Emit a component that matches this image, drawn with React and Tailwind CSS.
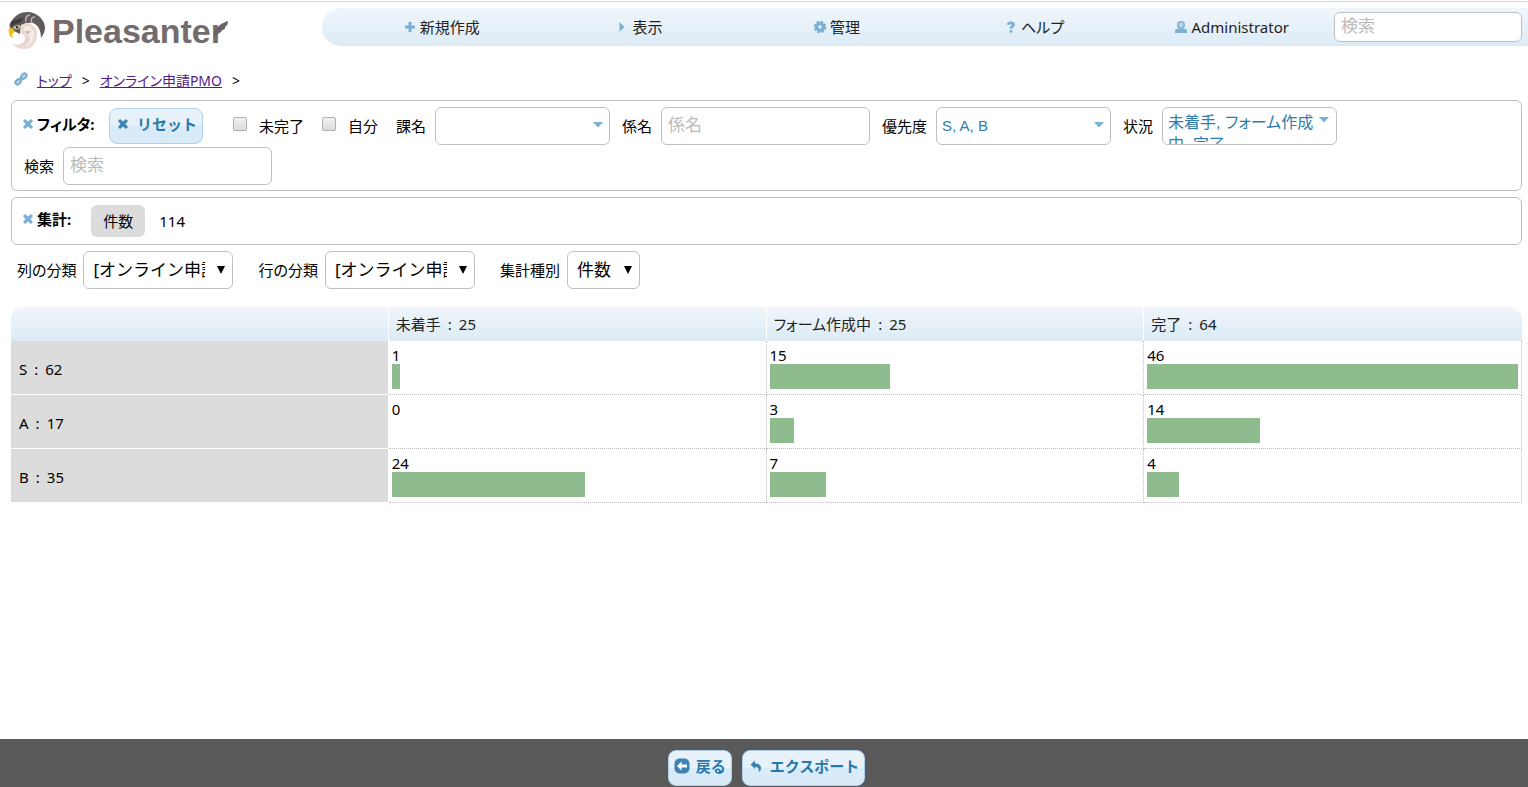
import React, { useState } from "react";

const icons = {
  plus: <path d="M6.5 3h3v3.5H13v3H9.500V13h-3V9.500H3v-3h3.500z" />,
  right: <path d="M5.500 3 10.500 8 5.500 13z" />,
  down: <path d="M3 5h10L8 10.500z" />,
  close: (
    <path d="M3 5 5 3l3 2.500L11 3l2 2-2.500 3L13 11l-2 2-3-2.500L5 13l-2-2 2.500-3z" />
  ),
  gear: (
    <>
      <circle cx="8" cy="8" r="3.400" fill="none" stroke="currentColor" strokeWidth="3.400" />
      <circle
        cx="8"
        cy="8"
        r="5.300"
        fill="none"
        stroke="currentColor"
        strokeWidth="2"
        strokeDasharray="2.400 1.763"
      />
    </>
  ),
  help: (
    <>
      <path
        d="M5.300 5.800C5.300 3.300 10.500 3.300 10.500 5.800 10.500 7.600 8 7.200 8 9.700"
        fill="none"
        stroke="currentColor"
        strokeWidth="2.800"
      />
      <path d="M6.600 11h2.800v2.600H6.600z" />
    </>
  ),
  person: (
    <>
      <circle cx="8" cy="6" r="3.200" fillOpacity="0.4" stroke="currentColor" strokeWidth="1.500" />
      <path d="M2 14v-2c0-1.500 1.500-2.200 3-2.200h6c1.500 0 3 .7 3 2.200v2z" />
    </>
  ),
  link: (
    <g
      fill="currentColor"
      fillOpacity="0.4"
      stroke="currentColor"
      strokeWidth="2.200"
      transform="rotate(-45 8 8)"
    >
      <rect x="1" y="6" width="6" height="4" rx="2" />
      <rect x="9" y="6" width="6" height="4" rx="2" />
      <path d="M6 8h4" />
    </g>
  ),
  back: (
    <>
      <rect x="0.500" y="0.500" width="15" height="15" rx="5" />
      <path d="M3 8l4.500-4.500v3H13v3H7.500v3z" fill="#fff" />
    </>
  ),
  undo: (
    <path d="M2.500 6.500 7 2.500v3c4 0 6 2 6 4.500 0 2-1 3.500-2.500 4 1-2.500 0-5-3.500-5v2z" />
  ),
};

const Icon = ({ name, className = "w-4 h-4 text-[#7bafd4]" }) => (
  <svg viewBox="0 0 16 16" fill="currentColor" className={`shrink-0 ${className}`} aria-hidden="true">
    {icons[name]}
  </svg>
);

const menus = [
  { icon: "plus", label: "新規作成" },
  { icon: "right", label: "表示" },
  { icon: "gear", label: "管理" },
  { icon: "help", label: "ヘルプ" },
  { icon: "person", label: "Administrator" },
];

const columns = [
  { label: "未着手", total: 25 },
  { label: "フォーム作成中", total: 25 },
  { label: "完了", total: 64 },
];

const rows = [
  { label: "S", total: 62, values: [1, 15, 46] },
  { label: "A", total: 17, values: [0, 3, 14] },
  { label: "B", total: 35, values: [24, 7, 4] },
];

const maxValue = Math.max(...rows.flatMap((row) => row.values));

const Logo = () => (
  <a href="#top" className="flex items-center w-[322px] h-[42px] pt-1 pl-2 shrink-0" aria-label="Pleasanter">
    <svg viewBox="0 0 38 38" className="w-[38px] h-[38px]" aria-hidden="true">
      <path
        d="M3 10C7 3 13 0 19 0c10 0 17 7 18 15 0 5-2 8-4 11 0-8-3-13-8-15-5-1-9 0-12 3l-1 8-8-4C1 15 1 12 3 10z"
        fill="#615a5d"
      />
      <path
        d="M13 13c7-4 14-1 16 7 1 10-5 17-13 17-5 0-9-2-11-5 7 2 12-2 12-6 0-3-3-3-5-6z"
        fill="#ead9d2"
      />
      <path d="M16 15c6-2 10 2 10 8 0 6-4 11-9 12 5-4 6-9 4-12-2-2-5-3-5-8z" fill="#f6ece7" />
      <path d="M3 10c4-3 9-2 13-5-2 5-5 6-7 7-3 0-5 1-7 4z" fill="#3f3b3e" />
      <path d="M5 15c3-2 6-2 8-1-1 3-4 4-7 3z" fill="#c9c3a4" />
      <circle cx="9" cy="15.200" r="1.200" fill="#2b2829" />
      <path d="M1 16c2-1 5 1 6 4-3 1-3 4-2 6-4-1-5-6-4-10z" fill="#f2c41a" />
      <path
        d="M18 10c-1-4 1-7 4-7M24 11c-2-4 0-6 3-6M18 19l2 2 2-2"
        fill="none"
        stroke="#b9b2b4"
        strokeWidth="1.500"
      />
    </svg>
    <span className="pl-1.5 font-['Liberation_Sans'] text-[34px] leading-[38px] font-bold text-[#746b6d]">
      Pleasanter
    </span>
    <svg viewBox="0 0 14 16" className="w-3.5 h-4 -ml-2.5 mb-1" aria-hidden="true">
      <path d="M0 11C3 5 8 2 14 0c0 3-1 5-3 6 1 1-1 3-3 3 0 2-3 3-8 7z" fill="#6b6265" />
    </svg>
  </a>
);

const fieldClass = "h-[38px] rounded-md border border-[#c0c0c0] bg-white";

const TextField = ({ id, label }) => (
  <div className="flex items-center gap-[9px]">
    <label htmlFor={id}>{label}</label>
    <input
      id={id}
      type="text"
      placeholder={label}
      className={`${fieldClass} w-[209px] px-1.5 pb-1 text-[17px] placeholder-[#bbb]`}
    />
  </div>
);

const FilterSelect = ({ id, label, value }) => (
  <div className="flex items-center gap-[9px]">
    <label htmlFor={id}>{label}</label>
    <div className="relative">
      <select
        id={id}
        className={`${fieldClass} w-[175px] appearance-none pl-[5px] pr-6 font-['Liberation_Sans','Noto_Sans_CJK_JP',sans-serif] text-[15px] text-[#2e7cad]`}
      >
        <option>{value}</option>
      </select>
      <Icon name="down" className="absolute right-1 top-2.5 w-4 h-4 text-[#7bafd4] pointer-events-none" />
    </div>
  </div>
);

const ViewSelect = ({ id, label, value, width }) => (
  <div className="flex items-center gap-[7px]">
    <label htmlFor={id}>{label}</label>
    <div className="relative">
      <select
        id={id}
        className={`${fieldClass} ${width} appearance-none pl-[9px] pr-[27px] text-[17px] [font-feature-settings:normal]`}
      >
        <option>{value}</option>
      </select>
      <svg
        viewBox="0 0 8 8"
        className="absolute right-2 top-[15px] w-2 h-2 pointer-events-none"
        aria-hidden="true"
      >
        <path d="M0 0h8L4 8z" />
      </svg>
    </div>
  </div>
);

const ActionButton = ({ icon, children, className = "" }) => (
  <button
    type="button"
    className={`flex items-center gap-1.5 h-9 px-[5px] pb-1 rounded-lg border border-[#aed0ea] bg-linear-to-b from-[#e6f1fa] from-50% to-[#d9ebf8] to-50% font-bold text-[#2779aa] cursor-pointer [font-feature-settings:normal] ${className}`}
  >
    <Icon name={icon} className="w-4 h-4 text-[#3d84b5]" />
    {children}
  </button>
);

const PanelTitle = ({ children, className = "" }) => (
  <div className={`flex items-center pb-1 font-bold ${className}`}>
    <Icon name="close" className="w-4 h-4 -ml-1 mr-px text-[#7bafd4]" />
    {children}
  </div>
);

const Total = ({ label, total }) => (
  <>
    {label}
    <span className="mx-[7px]">:</span>
    {total}
  </>
);

const App = () => {
  const [incomplete, setIncomplete] = useState(false);
  const [own, setOwn] = useState(false);

  const checks = [
    { id: "incomplete", label: "未完了", checked: incomplete, onChange: setIncomplete },
    { id: "own", label: "自分", checked: own, onChange: setOwn },
  ];

  return (
    <div className="flex flex-col min-h-screen bg-white font-['Noto_Sans','Noto_Sans_CJK_JP',sans-serif] text-[15px] leading-5 text-black [font-feature-settings:'palt']">
      <header className="flex items-start mt-px pt-1.5 border-t border-[#d3dadb]">
        <Logo />
        <nav className="flex flex-1 items-center gap-1 h-[38px] pl-5 pr-1.5 rounded-l-full rounded-br-md bg-linear-to-b from-[#f0f6fb] to-[#dcebf6]">
          <ul className="grid grid-cols-5 flex-1">
            {menus.map((menu) => (
              <li key={menu.label}>
                <a href="#menu" className="flex items-center justify-center gap-0.5 text-[#222]">
                  <Icon name={menu.icon} />
                  {menu.label}
                </a>
              </li>
            ))}
          </ul>
          <input
            type="search"
            aria-label="検索"
            placeholder="検索"
            className="w-[188px] h-[30px] rounded-md border border-[#c0c0c0] bg-white px-1.5 pb-1 text-[17px] placeholder-[#bbb]"
          />
        </nav>
      </header>

      <main className="flex-1 pl-[11px] pr-1.5">
        <div className="flex items-center gap-2.5 pt-[21px] pb-2 pl-0.5 text-sm leading-5">
          <Icon name="link" className="w-4 h-4 mb-1 -mr-0.5 text-[#7bafd4]" />
          <a href="#top" className="text-[#551a8b] underline">
            トップ
          </a>
          <span>&gt;</span>
          <a href="#site" className="text-[#551a8b] underline">
            オンライン申請PMO
          </a>
          <span>&gt;</span>
        </div>

        <section className="flex flex-wrap items-center gap-y-0.5 gap-x-3 mt-px px-3 pt-1.5 pb-[5px] border border-[#c0c0c0] rounded-md">
          <PanelTitle className="w-[73px]">フィルタ:</PanelTitle>
          <ActionButton icon="close" className="mr-[18px]">
            リセット
          </ActionButton>
          {checks.map((check) => (
            <div key={check.id} className="flex items-center gap-3 mr-1.5">
              <input
                id={check.id}
                type="checkbox"
                checked={check.checked}
                onChange={(e) => check.onChange(e.target.checked)}
                className="w-3.5 h-3.5 mb-1 appearance-none rounded-xs border border-[#b0b0b0] bg-linear-to-b from-[#f0f0f0] to-[#dcdcdc] checked:from-[#7bafd4] checked:to-[#2779aa]"
              />
              <label htmlFor={check.id}>{check.label}</label>
            </div>
          ))}
          <FilterSelect id="section" label="課名" value="" />
          <TextField id="unit" label="係名" />
          <FilterSelect id="priority" label="優先度" value="S, A, B" />
          <div className="flex items-center gap-[9px]">
            <span id="status-label">状況</span>
            <button
              type="button"
              aria-labelledby="status-label"
              aria-haspopup="listbox"
              className={`${fieldClass} flex items-start w-[175px] overflow-hidden pl-[5px] pr-1 pt-1 text-left text-[#2e7cad] cursor-pointer`}
            >
              <span className="flex-1 text-base leading-[22px] font-['Liberation_Sans','Noto_Sans_CJK_JP',sans-serif]">
                未着手, フォーム作成中, 完了
              </span>
              <Icon name="down" />
            </button>
          </div>
          <TextField id="keyword" label="検索" />
        </section>

        <section className="flex items-center h-12 mt-1.5 px-3 border border-[#c0c0c0] rounded-md">
          <PanelTitle>集計:</PanelTitle>
          <span className="ml-5 px-3 py-1.5 rounded-md bg-[#dcdcdc]">件数</span>
          <span className="ml-3.5">114</span>
        </section>

        <div className="flex gap-[25px] mt-1.5 pl-1.5">
          <ViewSelect id="group-x" label="列の分類" value="[オンライン申請PMO] 状況" width="w-[150px]" />
          <ViewSelect id="group-y" label="行の分類" value="[オンライン申請PMO] 優先度" width="w-[150px]" />
          <ViewSelect id="aggregate" label="集計種別" value="件数" width="w-[73px]" />
        </div>

        <table className="w-full table-fixed border-separate border-spacing-0 mt-[18px]">
          <thead>
            <tr className="h-[34px]">
              <td className="rounded-tl-xl border-r border-white bg-linear-to-b from-[#f0f6fb] to-[#dcebf6]" />
              {columns.map((column) => (
                <th
                  key={column.label}
                  scope="col"
                  className="border-r border-white last:border-r-0 last:rounded-tr-xl bg-linear-to-b from-[#f0f6fb] to-[#dcebf6] px-[7px] text-left font-normal text-[#222]"
                >
                  <Total label={column.label} total={column.total} />
                </th>
              ))}
            </tr>
          </thead>
          <tbody>
            {rows.map((row) => (
              <tr key={row.label} className="h-[54px]">
                <th
                  scope="row"
                  className="border-r border-b border-white bg-[#dcdcdc] px-2 pt-0.5 text-left font-normal"
                >
                  <Total label={row.label} total={row.total} />
                </th>
                {row.values.map((value, i) => (
                  <td
                    key={i}
                    className="border-r border-b border-dotted border-[#c0c0c0] px-[3px] pt-1.5 align-top"
                  >
                    <div className="leading-[17px]">{value}</div>
                    <div
                      className="h-[25px] bg-[#8fbc8f]"
                      style={{ width: `${(value / maxValue) * 100}%` }}
                    />
                  </td>
                ))}
              </tr>
            ))}
          </tbody>
        </table>
      </main>

      <footer className="flex justify-center gap-2.5 h-12 pt-[11px] pl-[11px] pr-1.5 bg-[#595959]">
        <ActionButton icon="back">戻る</ActionButton>
        <ActionButton icon="undo">エクスポート</ActionButton>
      </footer>
    </div>
  );
};

export default App;
